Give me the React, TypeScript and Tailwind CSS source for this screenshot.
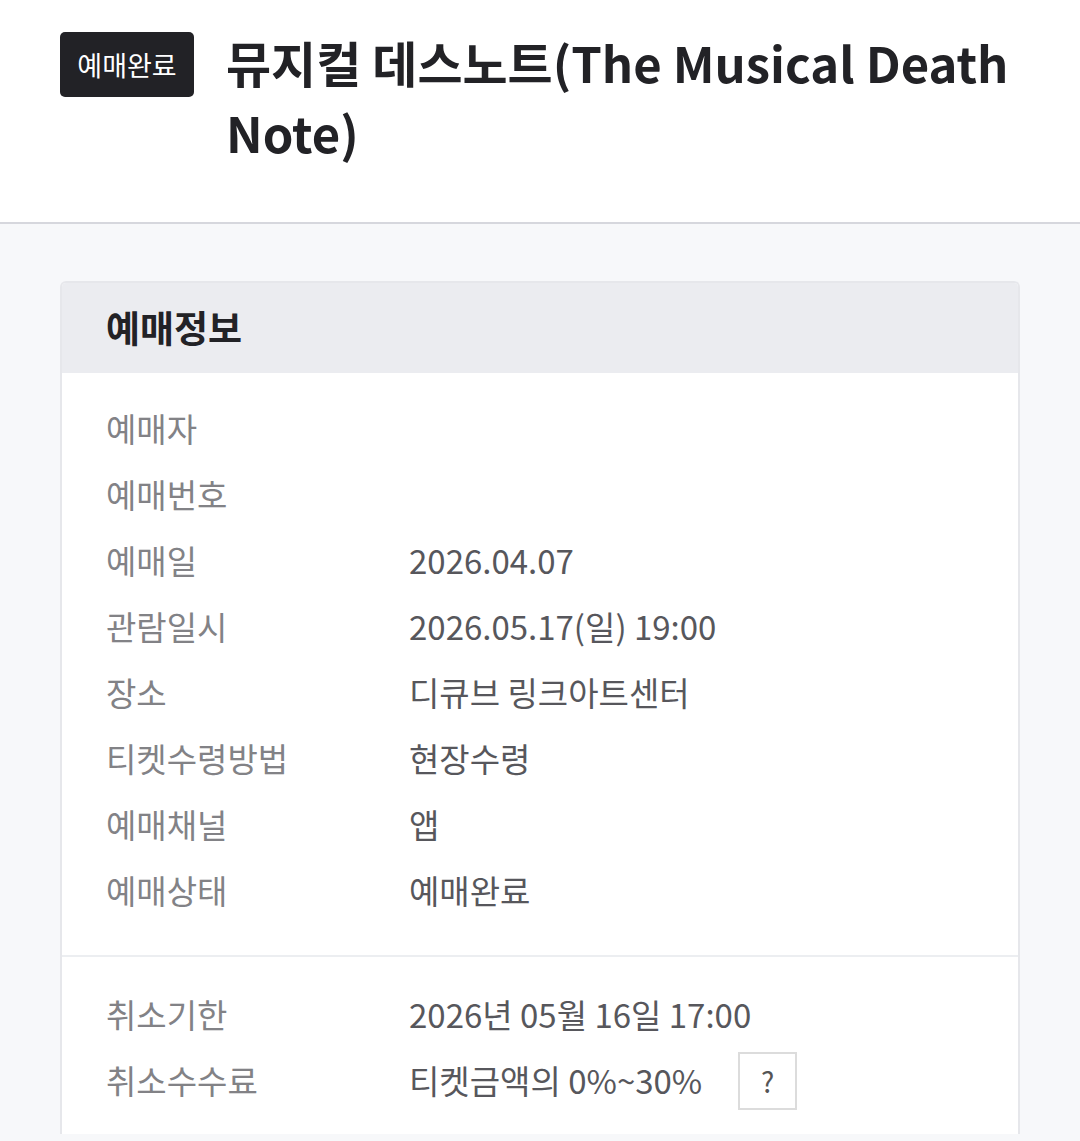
import React from 'react';

const rows = [
  { label: '예매자', value: '' },
  { label: '예매번호', value: '' },
  { label: '예매일', value: '2026.04.07' },
  { label: '관람일시', value: '2026.05.17(일) 19:00' },
  { label: '장소', value: '디큐브 링크아트센터' },
  { label: '티켓수령방법', value: '현장수령' },
  { label: '예매채널', value: '앱' },
  { label: '예매상태', value: '예매완료' },
];

const Row = ({ label, children }: { label: string; children?: React.ReactNode }) => (
  <div className="flex items-center h-[66px]">
    <div className="w-[303px] shrink-0 text-[#828286]">{label}</div>
    <div className="flex items-center text-[#57575c]">{children}</div>
  </div>
);

const App = () => {
  return (
    <div
      className="min-h-[1141px] bg-[#f7f8fa]"
      style={{ fontFamily: '"Noto Sans CJK KR", "Noto Sans", sans-serif' }}
    >
      {/* top title */}
      <div className="bg-white h-[224px] border-b-2 border-[#d6d7dd] flex items-start pl-[60px] pr-[30px] pt-[32px]">
        <span className="shrink-0 bg-[#222226] text-white text-[27px] leading-none rounded-[5px] w-[134px] h-[65px] flex items-center justify-center">
          예매완료
        </span>
        <h1 className="ml-[32px] text-[49px] leading-[70px] font-bold text-[#222226] -mt-[5px]">
          뮤지컬 데스노트(The Musical Death Note)
        </h1>
      </div>

      {/* card */}
      <div className="mx-[60px] mt-[57px] rounded-t-[6px] border-2 border-b-0 border-[#e6e7eb] bg-white overflow-hidden">
        <div className="bg-[#ebecf0] h-[90px] flex items-center px-[44px]">
          <h2 className="text-[37px] font-bold text-[#222226]">예매정보</h2>
        </div>
        <div className="px-[44px] pt-[23px] pb-[31px] text-[33px] border-b-2 border-[#eceef1]">
          {rows.map((r) => (
            <Row key={r.label} label={r.label}>
              {r.value}
            </Row>
          ))}
        </div>
        <div className="px-[44px] pt-[25px] pb-[20px] text-[33px]">
          <Row label="취소기한">2026년 05월 16일 17:00</Row>
          <Row label="취소수수료">
            티켓금액의 0%~30%
            <span className="ml-[36px] w-[59px] h-[58px] border-2 border-[#dcdcdc] flex items-center justify-center text-[28px] text-[#555]">
              ?
            </span>
          </Row>
        </div>
      </div>
    </div>
  );
};

export default App;
